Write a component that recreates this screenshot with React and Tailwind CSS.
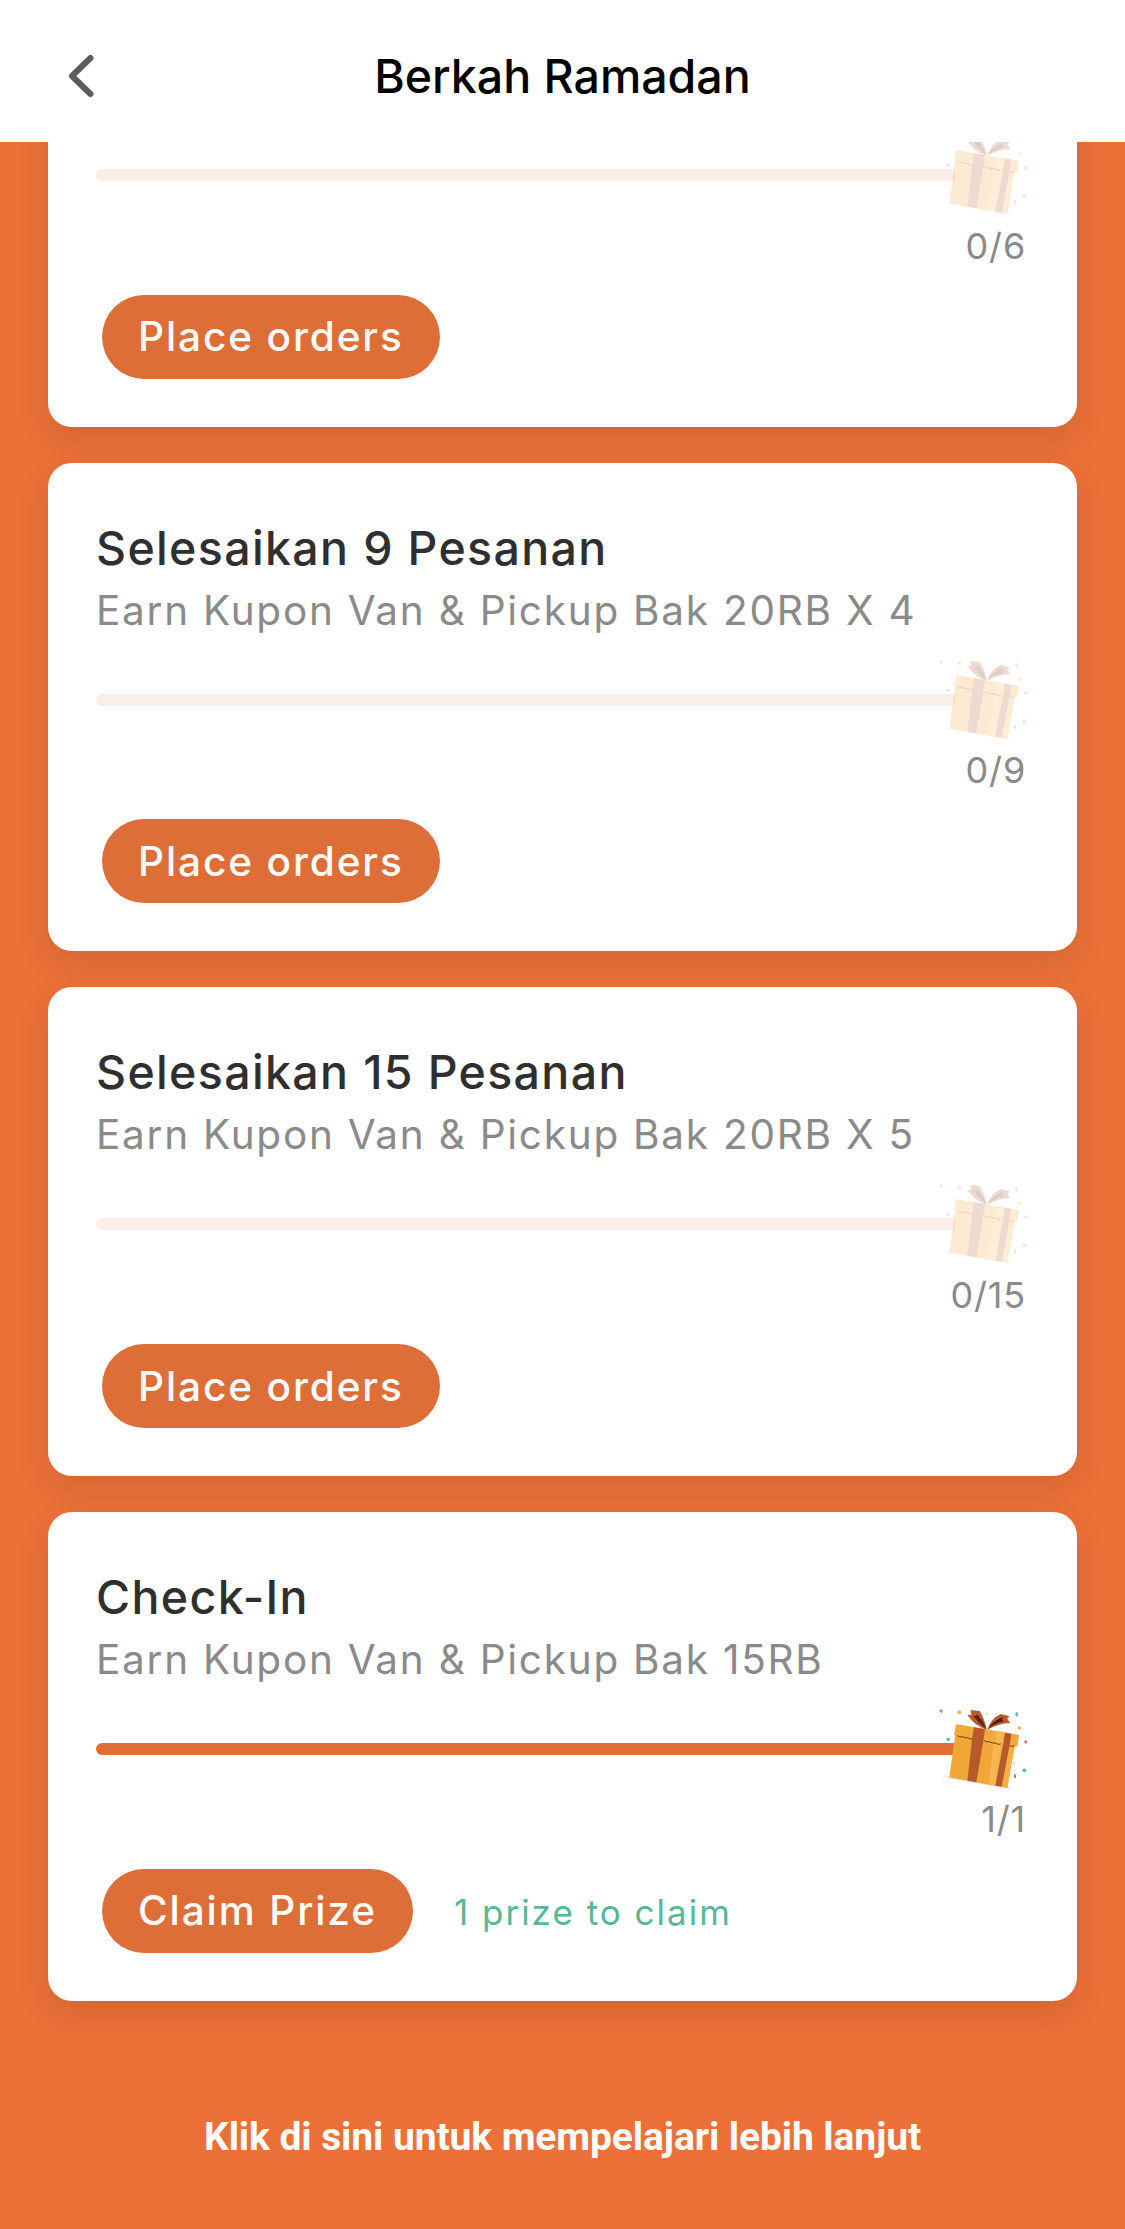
const tasks = [
  // scrolled most of the way out, only its lower half is on screen
  { id: 'orders-6', done: 0, goal: 6 },
  {
    id: 'orders-9',
    title: 'Selesaikan 9 Pesanan',
    reward: 'Earn Kupon Van & Pickup Bak 20RB X 4',
    done: 0,
    goal: 9,
  },
  {
    id: 'orders-15',
    title: 'Selesaikan 15 Pesanan',
    reward: 'Earn Kupon Van & Pickup Bak 20RB X 5',
    done: 0,
    goal: 15,
  },
  {
    id: 'check-in',
    title: 'Check-In',
    reward: 'Earn Kupon Van & Pickup Bak 15RB',
    done: 1,
    goal: 1,
  },
]

const GiftIcon = ({ className }) => (
  <svg viewBox="119 42 270 270" className={className} aria-hidden="true">
    {/* ground shadow */}
    <path d="M128 259 L155 260 L325 290 L340 297 L318 294 L150 265 Z" fill="#d9d9dc" />
    {/* box */}
    <path d="M168 132 L347 162 L324 293 L150 262 Z" fill="#f2a637" />
    <path d="M283 152 L307 156 L288 287 L268 283 Z" fill="#f5b550" />
    <path d="M329 160 L347 163 L324 293 L308 290 Z" fill="#f5b043" />
    {/* lid */}
    <path d="M170 102 L359 135 L354 170 L164 136 Z" fill="#f3a83a" />
    <path d="M291 123 L315 127 L311 161 L287 157 Z" fill="#f6b652" />
    {/* ribbons */}
    <path d="M224 112 L257 117 L252 152 L231 277 L204 272 L219 142 Z" fill="#b65a2c" />
    <path d="M317 128 L336 131 L331 164 L307 290 L288 287 L312 161 Z" fill="#b65a2c" />
    <path
      d="M174 137 q8 6 15 3 q8 5 16 3 q8 5 15 4 M253 151 q10 7 17 4 q9 5 17 4 q9 6 17 3 M331 166 q8 7 14 2"
      fill="none"
      stroke="#6b3d18"
      strokeWidth="3"
    />
    {/* bow */}
    <path d="M262 119 Q226 108 204 75 L216 74 L214 60 L241 63 Q256 86 262 119 Z" fill="#b9592c" />
    <path d="M262 117 Q236 99 221 76 L229 79 L233 72 Q251 91 262 117 Z" fill="#5a2415" />
    <path d="M264 119 Q275 85 304 72 L330 78 L324 87 L333 99 Q300 100 264 119 Z" fill="#b9592c" />
    <path d="M265 117 Q282 91 312 81 L308 89 L314 94 Q287 99 265 117 Z" fill="#4a1e14" />
    {/* confetti */}
    <path d="M120 63 L126 57 L130 62 L127 70 Z" fill="#d97855" />
    <circle cx="180" cy="67" r="6" fill="#eeb04c" />
    <circle cx="262" cy="71" r="3" fill="#f3c682" />
    <path d="M348 68 L355 66 L355 80 L349 78 Z" fill="#4cb99a" />
    <circle cx="360" cy="114" r="5.500" fill="#efb458" />
    <circle cx="147" cy="148" r="5" fill="#4cb99a" />
    <path d="M373 155 L380 150 L385 156 L379 162 Z" fill="#d5815f" />
    <circle cx="343" cy="220" r="3" fill="#f3c682" />
    <circle cx="375" cy="241" r="5.500" fill="#4cb99a" />
    <path d="M344 254 L349 251 L350 264 L344 263 Z" fill="#cf6a4b" />
  </svg>
)

const TaskCard = ({ task }) => {
  const complete = task.done >= task.goal

  return (
    <section className="h-[488.67px] shrink-0 rounded-3xl bg-white px-12 pt-[55px] pb-12 flex flex-col shadow-[0_12px_32px_rgba(0,0,0,0.1)]">
      <div className="h-[122px] whitespace-nowrap">
        {task.title && (
          <h2 className="text-[46.5px] leading-[60px] font-medium tracking-[1.35px] text-[#2f2f2f]">
            {task.title}
          </h2>
        )}
        {task.reward && (
          <p className="mt-0.5 text-[40.5px] leading-[61px] tracking-[1.75px] text-[#8a8a8a]">
            {task.reward}
          </p>
        )}
      </div>

      <div className="mt-[15px] flex items-center">
        <div
          className={`h-3 flex-1 rounded-l-full ${complete ? 'bg-[#e16d37]' : 'bg-[#fbeee9]'}`}
        />
        <GiftIcon className={`size-[90px] -ml-4 ${complete ? '' : 'opacity-[0.22]'}`} />
      </div>
      <p className="mt-[1.5px] pr-[3px] text-right text-[36px] leading-[48px] tracking-[0.8px] text-[#8a8a8a]">
        {task.done}/{task.goal}
      </p>

      <div className="mt-auto ml-1.5 flex items-center">
        <button className="h-[84px] rounded-full bg-[#de6e38] px-9 pt-0.5 text-[40.5px] font-medium tracking-[1.9px] text-white whitespace-nowrap">
          {complete ? 'Claim Prize' : 'Place orders'}
        </button>
        {complete && (
          <span className="ml-[41px] pt-[3px] text-[35px] tracking-[2px] text-[#57b798] whitespace-nowrap">
            1 prize to claim
          </span>
        )}
      </div>
    </section>
  )
}

const App = () => {
  return (
    <div className="h-[2229px] w-[1125px] flex flex-col overflow-hidden bg-[#eb7138] font-['Inter','Liberation_Sans',sans-serif]">
      <header className="z-10 h-[142px] shrink-0 grid grid-cols-[1fr_auto_1fr] items-center bg-white pt-[10px]">
        <button className="ml-[66px] w-[30px]" aria-label="Back">
          <svg viewBox="0 0 30 48" className="h-12 w-[30px]" fill="none">
            <path
              d="M24.500 6 L6 24 L24.500 42"
              stroke="#5c5c5c"
              strokeWidth="6"
              strokeLinecap="round"
              strokeLinejoin="round"
            />
          </svg>
        </button>
        <h1 className="text-[46.5px] leading-[60px] font-medium text-black">Berkah Ramadan</h1>
      </header>

      {/* list is scrolled, so the first card runs under the header */}
      <main className="-mt-[204px] px-12 flex flex-col gap-9">
        {tasks.map((task) => (
          <TaskCard key={task.id} task={task} />
        ))}
      </main>

      <footer className="mt-[106px] text-center font-['Roboto',sans-serif] text-[39px] leading-[60px] font-bold tracking-[-0.09px] text-white">
        Klik di sini untuk mempelajari lebih lanjut
      </footer>
    </div>
  )
}

export default App
